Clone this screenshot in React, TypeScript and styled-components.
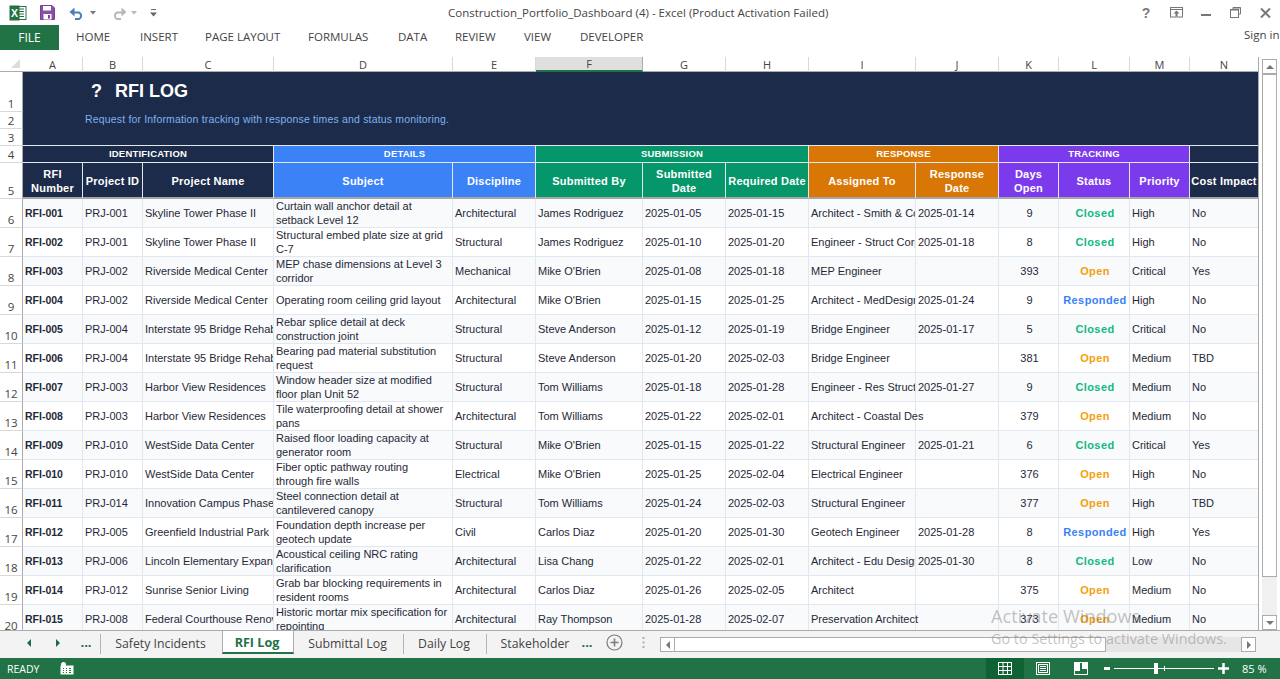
import React from "react";
import styled, { createGlobalStyle } from "styled-components";

const Global = createGlobalStyle`
  html, body { margin: 0; padding: 0; height: 100%; background: #fff; overflow: hidden; }
  #root { height: 100%; }
  * { box-sizing: border-box; }
`;

const UI = `"Open Sans", "Noto Sans", sans-serif`;
const CELL = `"Liberation Sans", Arial, sans-serif`;

const Page = styled.div`
  width: 1280px; height: 679px; display: flex; flex-direction: column; overflow: hidden; position: relative;
  font-family: ${UI}; background: #fff;
`;
const TitleBar = styled.div`
  height: 25px; display: flex; align-items: center; position: relative; flex: none;
`;
const Quick = styled.div`
  display: flex; align-items: center; padding-left: 9px; height: 25px;
`;
const DocTitle = styled.div`
  position: absolute; left: 448px; top: 4px; font-size: 11.5px; line-height: 18px; color: #444; white-space: nowrap;
`;
const WinButtons = styled.div`
  margin-left: auto; display: flex; align-items: center; height: 25px; padding-right: 9px;
`;
const RibbonTabs = styled.div`
  height: 25px; display: flex; align-items: stretch; position: relative; flex: none;
`;
const FileTab = styled.div`
  width: 59px; background: #217346; color: #fff; font-size: 12px; display: flex; align-items: center; justify-content: center;
`;
const RibbonTab = styled.div<{ $w: number }>`
  width: ${p => p.$w}px; padding-left: 17px; padding-bottom: 2px; font-size: 11.5px; color: #444; display: flex; align-items: center; white-space: nowrap;
`;
const SignIn = styled.div`
  margin-left: auto; font-size: 11.5px; color: #444; padding-top: 2px; display: flex; align-items: flex-start; white-space: nowrap; width: 36px;
`;
const Spacer = styled.div`
  height: 7px; flex: none;
`;
const SheetArea = styled.div`
  flex: none; height: 574px; display: flex; border-bottom: 1px solid #ababab;
`;
const Grid = styled.div`
  width: 1259px; height: 573px; overflow: hidden; display: grid; border-right: 1px solid #ababab;
  grid-template-columns: 23px 60px 60px 131px 179px 83px 107px 83px 83px 107px 83px 60px 71px 60px 69px;
  grid-template-rows: 15px 40px 17px 17px 17px 36px repeat(15, 29px);
  font-family: ${CELL};
`;
const Corner = styled.div`
  border-bottom: 1px solid #ababab; position: relative; background: #fff;
  &::after {
    content: ""; position: absolute; right: 3px; bottom: 3px; width: 0; height: 0;
    border-left: 9px solid transparent; border-bottom: 9px solid #dcdcdc;
  }
`;
const ColHead = styled.div<{ $sel?: boolean }>`
  font-family: ${UI}; font-size: 11px; color: #444; display: flex; align-items: center; justify-content: center;
  line-height: 14px; padding-top: 1px; background: ${p => (p.$sel ? "#dfdfdf" : "#fff")};
  border-right: 1px solid ${p => (p.$sel ? "#ababab" : "#d8d8d8")};
  border-bottom: ${p => (p.$sel ? "2px solid #217346" : "1px solid #ababab")};
`;
const RowHead = styled.div`
  font-family: ${UI}; font-size: 11.5px; color: #444; display: flex; align-items: flex-end; justify-content: center;
  line-height: 15px; background: #fff; border-bottom: 1px solid #d8d8d8; border-right: 1px solid #ababab;
`;
const Band = styled.div`
  grid-column: 2 / -1; grid-row: 2 / span 3; background: #1c2b4a; border-bottom: 1px solid #e2e8f0;
  display: flex; flex-direction: column;
`;
const BandTitle = styled.div`
  display: flex; align-items: center; height: 38px; padding-top: 1px; padding-left: 68px; color: #fff; font-size: 18px; font-weight: 700; white-space: nowrap;
`;
const BandMark = styled.span`
  width: 24px;
`;
const BandSub = styled.div`
  padding-left: 62px; margin-top: 2px; font-size: 10.5px; line-height: 14px; color: #7fb2f0; letter-spacing: 0.17px; white-space: nowrap;
`;
const Section = styled.div<{ $bg: string; $span: number }>`
  grid-column: span ${p => p.$span}; background: ${p => p.$bg}; color: #fff; font-size: 9.5px; font-weight: 700; letter-spacing: 0.2px;
  display: flex; align-items: center; justify-content: center; padding-bottom: 2px;
  border-right: 1px solid #e2e8f0; border-bottom: 1px solid #e2e8f0; white-space: nowrap;
`;
const Head = styled.div<{ $bg: string }>`
  background: ${p => p.$bg}; color: #fff; font-size: 11px; font-weight: 700; line-height: 14px; text-align: center;
  display: flex; align-items: center; justify-content: center; letter-spacing: 0.22px; overflow: hidden;
  white-space: pre-line; border-right: 1px solid #e2e8f0; border-bottom: 2px solid #a6a6a6; padding-top: 1px;
`;
const Cell = styled.div<{ $odd: boolean; $center?: boolean; $over?: boolean }>`
  background: ${p => (p.$odd ? "#fff" : "#f8fafc")};
  border-right: 1px solid #e2e8f0; border-bottom: 1px solid #e2e8f0;
  color: #1f2937;
  font-size: 11px; line-height: 14px;
  display: flex; align-items: center;
  justify-content: ${p => (p.$center ? "center" : "flex-start")};
  padding: 0 0 0 2px; min-width: 0;
  overflow: ${p => (p.$over ? "visible" : "hidden")};
  position: ${p => (p.$over ? "relative" : "static")};
  z-index: ${p => (p.$over ? 1 : "auto")};
  white-space: pre;
`;
const IdText = styled.span`
  font-size: 10.5px; font-weight: 700;
`;
const StatusText = styled.span<{ $color: string }>`
  font-weight: 700; letter-spacing: 0.4px; color: ${p => p.$color};
`;
const VScroll = styled.div`
  width: 21px; display: flex; flex-direction: column; align-items: center; padding: 2px 3px 0 3px; background: #fff; height: 573px;
`;
const ScrollBtn = styled.div`
  width: 15px; height: 15px; border: 1px solid #ababab; background: #fff; display: flex; align-items: center; justify-content: center; flex: none;
`;
const VThumb = styled.div`
  width: 15px; height: 503px; flex: none; border: 1px solid #ababab; background: #fff;
`;
const VTrack = styled.div`
  width: 15px; flex: 1; background: #f0f0f0;
`;
const TabBar = styled.div`
  height: 27px; flex: none; background: #f3f3f3; display: flex; align-items: flex-start; padding-left: 24px;
`;
const NavBtn = styled.div`
  width: 10px; height: 23px; display: flex; align-items: center; justify-content: center; flex: none;
`;
const Dots = styled.div<{ $w: number }>`
  color: #1e6b41; font-size: 13px; font-weight: 700; line-height: 23px; width: ${p => p.$w}px; text-align: center; flex: none;
`;
const Sep = styled.div`
  width: 1px; height: 20px; margin-top: 3px; background: #b4b4b4; flex: none;
`;
const Tab = styled.div<{ $w: number; $active?: boolean }>`
  width: ${p => p.$w}px; height: 23px; flex: none; display: flex; align-items: center; justify-content: center;
  font-size: ${p => (p.$active ? "12.6px" : "12.3px")}; white-space: nowrap; padding: 1px 2px 0 0;
  color: ${p => (p.$active ? "#217346" : "#444")};
  font-weight: ${p => (p.$active ? 700 : 400)};
  background: ${p => (p.$active ? "#fff" : "transparent")};
  border-left: ${p => (p.$active ? "1px solid #ababab" : "0")};
  border-right: ${p => (p.$active ? "1px solid #ababab" : "0")};
  border-bottom: ${p => (p.$active ? "2px solid #217346" : "0")};
`;
const TabTool = styled.div`
  height: 23px; display: flex; align-items: center; flex: none;
`;
const HScroll = styled.div`
  flex: none; width: 596px; height: 15px; margin-top: 6px; display: flex; background: #e6e6e6;
`;
const HThumb = styled.div`
  width: 431px; height: 15px; background: #fff; border: 1px solid #ababab; border-left: 0;
`;
const HFill = styled.div`
  flex: 1;
`;
const Status = styled.div`
  height: 21px; flex: none; background: #217346; color: #fff; display: flex; align-items: center; font-size: 11px;
`;
const Ready = styled.div`
  width: 60px; padding-left: 7px; font-size: 10.5px;
`;
const StatusRight = styled.div`
  margin-left: auto; display: flex; align-items: center; height: 21px;
`;
const ViewBtn = styled.div<{ $active?: boolean }>`
  width: 38px; height: 21px; display: flex; align-items: center; justify-content: center;
  background: ${p => (p.$active ? "#0f6234" : "transparent")};
`;
const Slider = styled.div`
  position: relative; width: 100px; height: 1px; background: #fff; margin: 0 4px;
`;
const SliderThumb = styled.div`
  position: absolute; left: 40px; top: -5px; width: 4px; height: 11px; background: #fff;
`;
const SliderTick = styled.div`
  position: absolute; left: 50px; top: -2px; width: 1px; height: 5px; background: #fff;
`;
const ZoomPct = styled.div`
  width: 51px; padding-left: 13px; font-size: 11px; white-space: nowrap;
`;
const WaterBig = styled.div`
  position: absolute; left: 991px; top: 603px; font-size: 18.2px; line-height: 26px; color: rgba(110,110,110,0.42); white-space: nowrap; pointer-events: none; z-index: 5;
`;
const WaterSmall = styled.div`
  position: absolute; left: 991px; top: 629px; font-size: 14.4px; line-height: 20px; color: rgba(110,110,110,0.42); white-space: nowrap; pointer-events: none; z-index: 5;
`;

const NAVY = "#1c2b4a", BLUE = "#3b82f6", GREEN = "#059669", ORANGE = "#d97706", PURPLE = "#7c3aed";
const cols = ["A","B","C","D","E","F","G","H","I","J","K","L","M","N"];
const heads: [string, string][] = [
  ["RFI\nNumber", NAVY], ["Project ID", NAVY], ["Project Name", NAVY],
  ["Subject", BLUE], ["Discipline", BLUE],
  ["Submitted By", GREEN], ["Submitted\nDate", GREEN], ["Required Date", GREEN],
  ["Assigned To", ORANGE], ["Response\nDate", ORANGE],
  ["Days\nOpen", PURPLE], ["Status", PURPLE], ["Priority", PURPLE], ["Cost Impact", NAVY],
];
const rows: string[][] = [
  ["RFI-001","PRJ-001","Skyline Tower Phase II","Curtain wall anchor detail at\nsetback Level 12","Architectural","James Rodriguez","2025-01-05","2025-01-15","Architect - Smith & Co","2025-01-14","9","Closed","High","No"],
  ["RFI-002","PRJ-001","Skyline Tower Phase II","Structural embed plate size at grid\nC-7","Structural","James Rodriguez","2025-01-10","2025-01-20","Engineer - Struct Corp","2025-01-18","8","Closed","High","No"],
  ["RFI-003","PRJ-002","Riverside Medical Center","MEP chase dimensions at Level 3\ncorridor","Mechanical","Mike O'Brien","2025-01-08","2025-01-18","MEP Engineer","","393","Open","Critical","Yes"],
  ["RFI-004","PRJ-002","Riverside Medical Center","Operating room ceiling grid layout","Architectural","Mike O'Brien","2025-01-15","2025-01-25","Architect - MedDesign","2025-01-24","9","Responded","High","No"],
  ["RFI-005","PRJ-004","Interstate 95 Bridge Rehab","Rebar splice detail at deck\nconstruction joint","Structural","Steve Anderson","2025-01-12","2025-01-19","Bridge Engineer","2025-01-17","5","Closed","Critical","No"],
  ["RFI-006","PRJ-004","Interstate 95 Bridge Rehab","Bearing pad material substitution\nrequest","Structural","Steve Anderson","2025-01-20","2025-02-03","Bridge Engineer","","381","Open","Medium","TBD"],
  ["RFI-007","PRJ-003","Harbor View Residences","Window header size at modified\nfloor plan Unit 52","Structural","Tom Williams","2025-01-18","2025-01-28","Engineer - Res Struct","2025-01-27","9","Closed","Medium","No"],
  ["RFI-008","PRJ-003","Harbor View Residences","Tile waterproofing detail at shower\npans","Architectural","Tom Williams","2025-01-22","2025-02-01","Architect - Coastal Des","","379","Open","Medium","No"],
  ["RFI-009","PRJ-010","WestSide Data Center","Raised floor loading capacity at\ngenerator room","Structural","Mike O'Brien","2025-01-15","2025-01-22","Structural Engineer","2025-01-21","6","Closed","Critical","Yes"],
  ["RFI-010","PRJ-010","WestSide Data Center","Fiber optic pathway routing\nthrough fire walls","Electrical","Mike O'Brien","2025-01-25","2025-02-04","Electrical Engineer","","376","Open","High","No"],
  ["RFI-011","PRJ-014","Innovation Campus Phase","Steel connection detail at\ncantilevered canopy","Structural","Tom Williams","2025-01-24","2025-02-03","Structural Engineer","","377","Open","High","TBD"],
  ["RFI-012","PRJ-005","Greenfield Industrial Park","Foundation depth increase per\ngeotech update","Civil","Carlos Diaz","2025-01-20","2025-01-30","Geotech Engineer","2025-01-28","8","Responded","High","Yes"],
  ["RFI-013","PRJ-006","Lincoln Elementary Expans","Acoustical ceiling NRC rating\nclarification","Architectural","Lisa Chang","2025-01-22","2025-02-01","Architect - Edu Design","2025-01-30","8","Closed","Low","No"],
  ["RFI-014","PRJ-012","Sunrise Senior Living","Grab bar blocking requirements in\nresident rooms","Architectural","Carlos Diaz","2025-01-26","2025-02-05","Architect","","375","Open","Medium","No"],
  ["RFI-015","PRJ-008","Federal Courthouse Renov","Historic mortar mix specification for\nrepointing","Architectural","Ray Thompson","2025-01-28","2025-02-07","Preservation Architect","","373","Open","Medium","No"],
];
const statusColor: Record<string, string> = { Closed: "#10b981", Open: "#f59e0b", Responded: "#3b82f6" };

const ExcelLogo = () => (
  <svg width="18" height="16" viewBox="0 0 18 16">
    <rect x="7" y="1.5" width="10" height="13" fill="#fff" stroke="#217346" />
    <path d="M10 4h5M10 6.5h5M10 9h5M10 11.5h5" stroke="#217346" strokeWidth="1.2" />
    <rect x="0.5" y="0.5" width="10" height="15" fill="#217346" />
    <text x="5.5" y="12" textAnchor="middle" fill="#fff" fontSize="10.5" fontWeight="700" fontFamily="Liberation Sans">X</text>
  </svg>
);
const SaveIcon = () => (
  <svg width="15" height="15" viewBox="0 0 15 15">
    <path d="M0.5 0.5h11.5l2.5 2.5v11.5h-14z" fill="#8a4fa8" stroke="#7a3f98" />
    <rect x="3" y="1" width="8" height="4.5" fill="#fff" />
    <rect x="3.5" y="9" width="8" height="5.5" fill="#fff" />
    <rect x="8" y="10" width="2" height="3.5" fill="#7a3f98" />
  </svg>
);
const UndoPath = ({ c }: { c: string }) => (
  <>
    <path d="M4 6.5h6a3.6 3.6 0 0 1 0 6.6H6" fill="none" stroke={c} strokeWidth="2" />
    <path d="M5.5 1.5v9L0.5 6z" fill={c} />
  </>
);
const Undo = styled.svg.attrs({ width: 16, height: 14, viewBox: "0 0 16 14" })``;
const Redo = styled(Undo)`
  transform: scaleX(-1);
`;
const CaretSvg = styled.svg.attrs({ width: 6, height: 4, viewBox: "0 0 6 4" })<{ $ml: number }>`
  margin-left: ${p => p.$ml}px;
`;
const Customize = () => (
  <svg width="7" height="8" viewBox="0 0 7 8">
    <path d="M1 0.5h5" stroke="#666" />
    <path d="M0 3.5h7L3.5 7.5z" fill="#666" />
  </svg>
);
const Gap = styled.span<{ $w: number }>`
  display: inline-block; width: ${p => p.$w}px; flex: none;
`;
const HelpMark = styled.span`
  font-family: ${CELL}; font-weight: 700; font-size: 14px; color: #7a7a7a; line-height: 18px; width: 12px; text-align: center;
`;
const DisplayOpts = () => (
  <svg width="13" height="11" viewBox="0 0 13 11">
    <rect x="0.5" y="0.5" width="12" height="9.5" fill="none" stroke="#777" />
    <path d="M0.5 2.5h12" stroke="#777" />
    <path d="M6.5 3.5l-3 3h2v3h2v-3h2z" fill="#777" />
  </svg>
);
const Minimize = () => (
  <svg width="10" height="10" viewBox="0 0 10 10"><path d="M0 7h10" stroke="#777" strokeWidth="2" /></svg>
);
const Restore = () => (
  <svg width="11" height="11" viewBox="0 0 11 11">
    <path d="M3 2.5V0.5h7.5v6.5H8.5" fill="none" stroke="#777" />
    <rect x="0.5" y="2.5" width="8" height="8" fill="none" stroke="#777" />
    <path d="M0.5 3h8M3 1h7.5" stroke="#777" />
  </svg>
);
const CloseX = () => (
  <svg width="11" height="10" viewBox="0 0 11 10"><path d="M1 0.5l9 9M10 0.5l-9 9" stroke="#777" strokeWidth="2" /></svg>
);
const Arrow = ({ dir, c }: { dir: "l" | "r" | "u" | "d"; c: string }) => {
  const d = { l: "M5 0v8L1 4z", r: "M1 0v8l4-4z", u: "M0 5h8L4 1z", d: "M0 1h8L4 5z" }[dir];
  const vert = dir === "u" || dir === "d";
  return (
    <svg width={vert ? 8 : 6} height={vert ? 6 : 8} viewBox={vert ? "0 0 8 6" : "0 0 6 8"}>
      <path d={d} fill={c} />
    </svg>
  );
};
const PlusCircle = () => (
  <svg width="17" height="17" viewBox="0 0 17 17">
    <circle cx="8.5" cy="8.5" r="7.5" fill="none" stroke="#7d7d7d" strokeWidth="1.2" />
    <path d="M8.5 4.5v8M4.5 8.5h8" stroke="#7d7d7d" strokeWidth="1.6" />
  </svg>
);
const VDots = () => (
  <svg width="3" height="11" viewBox="0 0 3 11"><path d="M0.5 0h2v2h-2zM0.5 4.5h2v2h-2zM0.5 9h2v2h-2z" fill="#b0b0b0" /></svg>
);
const MacroIcon = () => (
  <svg width="14" height="13" viewBox="0 0 14 13">
    <rect x="0.5" y="3.5" width="13" height="9" fill="#fff" />
    <path d="M3 6.5h1M6 6.5h1M9 6.5h2M3 8.5h1M6 8.5h1M9 8.5h2M3 10.5h1M6 10.5h1M9 10.5h2" stroke="#217346" />
    <circle cx="3.5" cy="2.5" r="2.5" fill="#fff" />
  </svg>
);
const NormalView = () => (
  <svg width="14" height="13" viewBox="0 0 14 13">
    <rect x="0.5" y="0.5" width="13" height="12" fill="none" stroke="#fff" />
    <path d="M5 0.5v12M9.5 0.5v12M0.5 4.5h13M0.5 8.5h13" stroke="#fff" />
  </svg>
);
const PageView = () => (
  <svg width="14" height="13" viewBox="0 0 14 13">
    <rect x="0.5" y="0.5" width="13" height="12" fill="none" stroke="#fff" />
    <rect x="2.5" y="2.5" width="9" height="8" fill="none" stroke="#fff" />
    <path d="M4 4.5h6M4 6.5h6M4 8.5h6" stroke="#fff" />
  </svg>
);
const BreakView = () => (
  <svg width="14" height="13" viewBox="0 0 14 13">
    <rect x="0.5" y="0.5" width="13" height="12" fill="none" stroke="#fff" />
    <rect x="1" y="1" width="5" height="8" fill="#fff" />
    <rect x="8" y="1" width="5" height="6" fill="#fff" />
  </svg>
);
const ZoomMinus = () => (
  <svg width="6" height="3" viewBox="0 0 6 3"><rect width="6" height="3" fill="#fff" /></svg>
);
const ZoomPlus = () => (
  <svg width="11" height="11" viewBox="0 0 11 11"><path d="M0 4.25h11v2.5H0zM4.25 0h2.5v11h-2.5z" fill="#fff" /></svg>
);

export default function App() {
  return (
    <Page>
      <Global />
      <TitleBar>
        <Quick>
          <ExcelLogo />
          <Gap $w={13} />
          <SaveIcon />
          <Gap $w={14} />
          <Undo><UndoPath c="#4a80b8" /></Undo>
          <CaretSvg $ml={5}><path d="M0 0h6L3 3.5z" fill="#777" /></CaretSvg>
          <Gap $w={15} />
          <Redo><UndoPath c="#b8b8b8" /></Redo>
          <CaretSvg $ml={4}><path d="M0 0h6L3 3.5z" fill="#b8b8b8" /></CaretSvg>
          <Gap $w={13} />
          <Customize />
        </Quick>
        <DocTitle>Construction_Portfolio_Dashboard (4) - Excel (Product Activation Failed)</DocTitle>
        <WinButtons>
          <HelpMark>?</HelpMark>
          <Gap $w={18} />
          <DisplayOpts />
          <Gap $w={18} />
          <Minimize />
          <Gap $w={19} />
          <Restore />
          <Gap $w={19} />
          <CloseX />
        </WinButtons>
      </TitleBar>
      <RibbonTabs>
        <FileTab>FILE</FileTab>
        <RibbonTab $w={64}>HOME</RibbonTab>
        <RibbonTab $w={65}>INSERT</RibbonTab>
        <RibbonTab $w={103}>PAGE LAYOUT</RibbonTab>
        <RibbonTab $w={90}>FORMULAS</RibbonTab>
        <RibbonTab $w={57}>DATA</RibbonTab>
        <RibbonTab $w={69}>REVIEW</RibbonTab>
        <RibbonTab $w={56}>VIEW</RibbonTab>
        <RibbonTab $w={100}>DEVELOPER</RibbonTab>
        <SignIn>Sign in</SignIn>
      </RibbonTabs>
      <Spacer />
      <SheetArea>
        <Grid>
          <Corner />
          {cols.map(c => <ColHead key={c} $sel={c === "F"}>{c}</ColHead>)}

          <RowHead>1</RowHead>
          <RowHead>2</RowHead>
          <RowHead>3</RowHead>
          <Band>
            <BandTitle><BandMark>?</BandMark>RFI LOG</BandTitle>
            <BandSub>Request for Information tracking with response times and status monitoring.</BandSub>
          </Band>

          <RowHead>4</RowHead>
          <Section $bg={NAVY} $span={3}>IDENTIFICATION</Section>
          <Section $bg={BLUE} $span={2}>DETAILS</Section>
          <Section $bg={GREEN} $span={3}>SUBMISSION</Section>
          <Section $bg={ORANGE} $span={2}>RESPONSE</Section>
          <Section $bg={PURPLE} $span={3}>TRACKING</Section>
          <Section $bg={NAVY} $span={1} />

          <RowHead>5</RowHead>
          {heads.map(([t, bg]) => <Head key={t} $bg={bg}>{t}</Head>)}

          {rows.map((r, i) => {
            const odd = i % 2 === 1;
            return (
              <React.Fragment key={r[0]}>
                <RowHead>{i + 6}</RowHead>
                {r.map((v, j) => (
                  <Cell key={j} $odd={odd} $center={j === 10 || j === 11} $over={j === 8 && r[9] === ""}>
                    {j === 0 ? <IdText>{v}</IdText> : j === 11 ? <StatusText $color={statusColor[v]}>{v}</StatusText> : <span>{v}</span>}
                  </Cell>
                ))}
              </React.Fragment>
            );
          })}
        </Grid>
        <VScroll>
          <ScrollBtn><Arrow dir="u" c="#777" /></ScrollBtn>
          <VThumb />
          <VTrack />
          <ScrollBtn><Arrow dir="d" c="#777" /></ScrollBtn>
        </VScroll>
      </SheetArea>
      <TabBar>
        <NavBtn><Arrow dir="l" c="#1e6b41" /></NavBtn>
        <Gap $w={19} />
        <NavBtn><Arrow dir="r" c="#1e6b41" /></NavBtn>
        <Gap $w={11} />
        <Dots $w={24}>...</Dots>
        <Gap $w={2} />
        <Sep />
        <Tab $w={121}>Safety Incidents</Tab>
        <Tab $w={72} $active>RFI Log</Tab>
        <Tab $w={109}>Submittal Log</Tab>
        <Sep />
        <Tab $w={82}>Daily Log</Tab>
        <Sep />
        <Gap $w={4} />
        <Tab $w={90}>Stakeholder</Tab>
        <Dots $w={12}>...</Dots>
        <Gap $w={13} />
        <TabTool><PlusCircle /></TabTool>
        <Gap $w={19} />
        <TabTool><VDots /></TabTool>
        <Gap $w={15} />
        <HScroll>
          <ScrollBtn><Arrow dir="l" c="#777" /></ScrollBtn>
          <HThumb />
          <HFill />
          <ScrollBtn><Arrow dir="r" c="#777" /></ScrollBtn>
        </HScroll>
      </TabBar>
      <Status>
        <Ready>READY</Ready>
        <MacroIcon />
        <StatusRight>
          <ViewBtn $active><NormalView /></ViewBtn>
          <ViewBtn><PageView /></ViewBtn>
          <ViewBtn><BreakView /></ViewBtn>
          <Gap $w={4} />
          <ZoomMinus />
          <Slider><SliderThumb /><SliderTick /></Slider>
          <ZoomPlus />
          <ZoomPct>85 %</ZoomPct>
        </StatusRight>
      </Status>
      <WaterBig>Activate Windows</WaterBig>
      <WaterSmall>Go to Settings to activate Windows.</WaterSmall>
    </Page>
  );
}
